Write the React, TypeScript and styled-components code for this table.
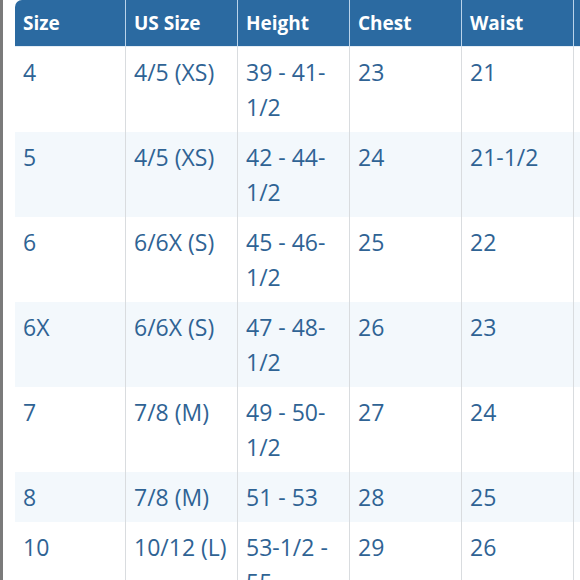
import styled, { createGlobalStyle } from 'styled-components'

const GlobalStyle = createGlobalStyle`
  html, body {
    margin: 0;
    padding: 0;
    background: #ffffff;
    overflow: hidden;
  }
`

const Page = styled.div`
  width: 580px;
  height: 580px;
  overflow: hidden;
  border-left: 3px solid #7a7a7a;
  box-sizing: border-box;
  padding-left: 12px;
  font-family: "Open Sans", "Noto Sans", sans-serif;
`

const Table = styled.table`
  border-collapse: separate;
  border-spacing: 0;
  table-layout: fixed;
  width: 672px;
`

const HeadCell = styled.th`
  background: #2b6aa1;
  color: #ffffff;
  font-size: 19px;
  font-weight: 700;
  text-align: left;
  height: 47px;
  padding: 0 8px;
  box-sizing: border-box;
  border-right: 1px solid #b9d3ea;
  border-bottom: 1px solid #e4edf5;
  &:first-child {
    border-top-left-radius: 7px;
  }
`

const Row = styled.tr<{ $shaded: boolean }>`
  background: ${p => (p.$shaded ? '#f3f8fc' : '#ffffff')};
`

const Cell = styled.td`
  color: #2f6394;
  font-size: 23px;
  line-height: 35px;
  padding: 8px 8px 7px;
  vertical-align: top;
  border-right: 1px solid #d9dcdf;
`

const columns = ['Size', 'US Size', 'Height', 'Chest', 'Waist', 'Hip']
const widths = [111, 112, 112, 112, 112, 113]

const rows = [
  ['4', '4/5 (XS)', '39 - 41-1/2', '23', '21', ''],
  ['5', '4/5 (XS)', '42 - 44-1/2', '24', '21-1/2', ''],
  ['6', '6/6X (S)', '45 - 46-1/2', '25', '22', ''],
  ['6X', '6/6X (S)', '47 - 48-1/2', '26', '23', ''],
  ['7', '7/8 (M)', '49 - 50-1/2', '27', '24', ''],
  ['8', '7/8 (M)', '51 - 53', '28', '25', ''],
  ['10', '10/12 (L)', '53-1/2 - 55', '29', '26', ''],
]

const App = () => (
  <Page>
    <GlobalStyle />
    <Table>
      <colgroup>
        {widths.map((w, i) => (
          <col key={i} style={{ width: w }} />
        ))}
      </colgroup>
      <thead>
        <tr>
          {columns.map(c => (
            <HeadCell key={c}>{c === 'Hip' ? '' : c}</HeadCell>
          ))}
        </tr>
      </thead>
      <tbody>
        {rows.map((r, i) => (
          <Row key={i} $shaded={i % 2 === 1}>
            {r.map((v, j) => (
              <Cell key={j}>{v}</Cell>
            ))}
          </Row>
        ))}
      </tbody>
    </Table>
  </Page>
)

export default App
